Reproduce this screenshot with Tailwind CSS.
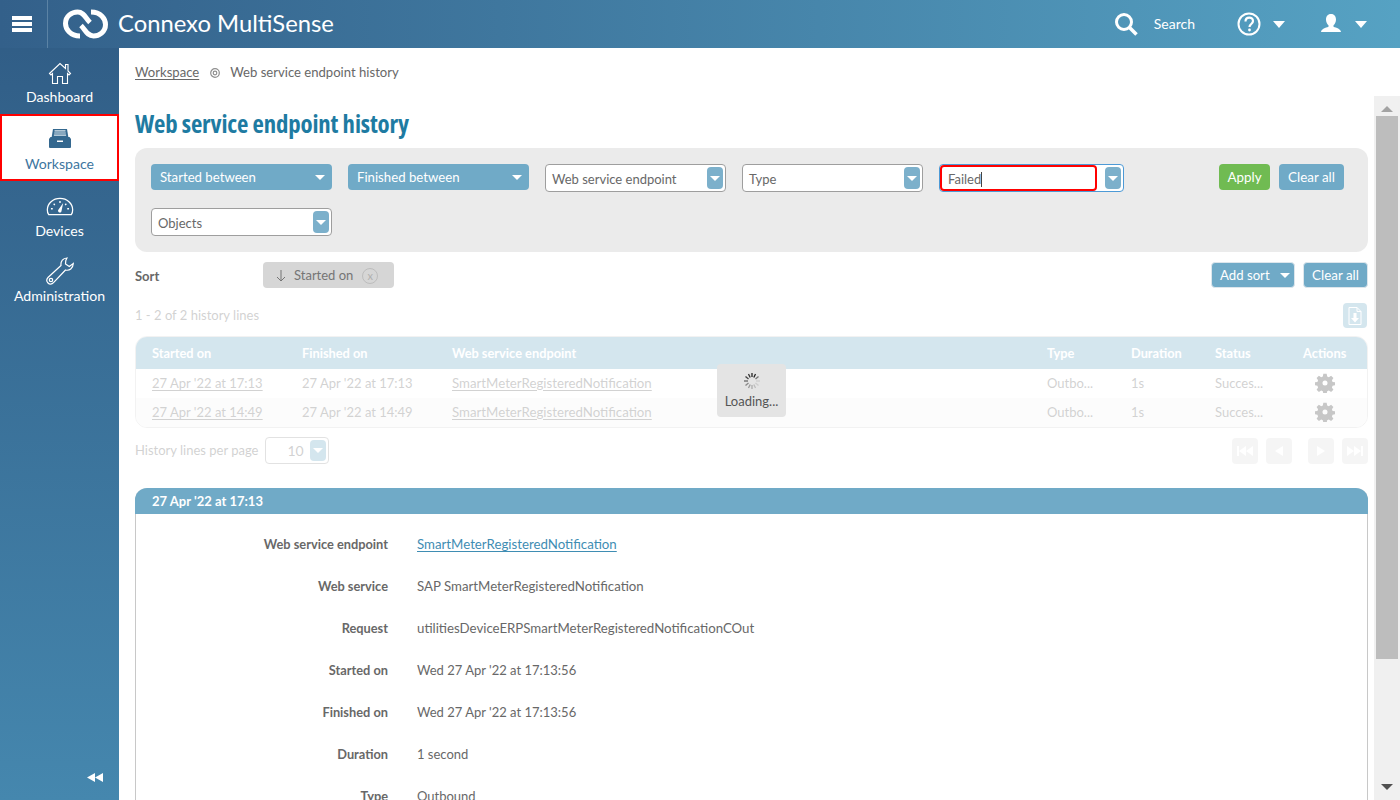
<!DOCTYPE html>
<html lang="en">
<head>
  <meta charset="UTF-8" />
  <title>Web service endpoint history</title>
  <script src="https://cdn.jsdelivr.net/npm/@tailwindcss/browser@4"></script>
</head>
<body class="h-[800px] w-[1400px] overflow-hidden bg-white font-['Lato',sans-serif] text-[13px] text-[#686868]">
  <!-- top bar -->
  <header class="flex h-12 items-center bg-gradient-to-r from-[#33608a] to-[#56a2c3] text-white">
    <div class="flex h-12 w-12 items-center justify-center border-r border-[#5b83a5] pr-[4px]">
      <div class="flex w-5 flex-col gap-[2px]">
        <span class="h-1 bg-white"></span><span class="h-1 bg-white"></span><span class="h-1 bg-white"></span>
      </div>
    </div>
    <svg class="ml-[15px]" width="45" height="30" viewBox="0 0 45 30" fill="none" stroke="white" stroke-width="5">
      <path d="M17 27C7 27 2.500 20 2.500 14.500 2.500 7 9 3 14.500 3 21 3 22.500 9 27 13.500" />
      <path d="M28 3C38 3 42.500 10 42.500 15.500 42.500 23 36 27 30.500 27 24 27 22.500 21 18 16.500" />
    </svg>
    <div class="ml-[10px] text-[23.8px] leading-none">Connexo MultiSense</div>
    <div class="ml-auto flex items-center">
      <svg width="24" height="24" viewBox="0 0 24 24" fill="none" stroke="white">
        <circle cx="10" cy="10" r="7.500" stroke-width="3" />
        <path d="M15.500 15.500 22.500 22.500" stroke-width="3.500" />
      </svg>
      <span class="ml-[16px] pb-[2px] pr-px text-[14px]">Search</span>
      <svg class="ml-[41px]" width="24" height="24" viewBox="0 0 24 24" fill="none" stroke="white">
        <circle cx="12" cy="12" r="10.500" stroke-width="2" />
        <path d="M8.500 9.500c0-5 7.500-5 7.500-.5 0 3-3.500 3-3.500 6" stroke-width="2.200" />
        <circle cx="12.500" cy="18" r="1.400" fill="white" stroke="none" />
      </svg>
      <span class="ml-[12px] h-0 w-0 border-x-[6px] border-t-[7px] border-x-transparent border-t-white"></span>
      <svg class="ml-[35px]" width="22" height="22" viewBox="0 0 22 22" fill="white">
        <path d="M11 1c3.500 0 5 2.700 5 5.500 0 2.300-1 4.500-2.500 5.800v1.500c3 1 7 2 7.500 5.200H1c.5-3.200 4.500-4.200 7.500-5.200v-1.500C7 11 6 8.800 6 6.500 6 3.700 7.500 1 11 1z" />
      </svg>
      <span class="ml-[13px] mr-[33px] h-0 w-0 border-x-[6px] border-t-[7px] border-x-transparent border-t-white"></span>
    </div>
  </header>

  <div class="flex h-[752px]">
    <!-- side menu -->
    <nav class="relative flex w-[119px] shrink-0 flex-col bg-gradient-to-b from-[#315e87] to-[#4587ae] text-[14.100px] text-white">
      <a class="flex h-[66px] flex-col items-center pt-[13px]">
        <svg width="24" height="24" viewBox="0 0 24 24" fill="none" stroke="white" stroke-width="1.100">
          <path d="M1.500 12.500 12 2.500l5.500 5V3.500h2.500v6.500l2.500 2.500-1.500 1.500-1.500-1.500V22.500h-5v-7h-5v7h-5V12.500L3 14z" />
        </svg>
        <span class="mt-[3px] leading-[17px]">Dashboard</span>
      </a>
      <a class="flex h-[67px] flex-col items-center border-2 border-[#ff0000] bg-white pt-[13px] text-[#3d76a0]">
        <svg width="22" height="19" viewBox="0 0 22 19" fill="#34688f">
          <path d="M4 0h14l1.500 9h-17z" />
          <path d="M5.500 1.800h11M5.200 4h11.600M4.900 6.200h12.200" stroke="#dce8f0" stroke-width="1.200" />
          <path d="M1.500 8h19l1.500 2v8a1 1 0 0 1-1 1H1a1 1 0 0 1-1-1v-8z" />
          <path d="M8 11.500h6V13H8z" fill="white" />
        </svg>
        <span class="mt-[7px] leading-[17px]">Workspace</span>
      </a>
      <a class="flex h-[65px] flex-col items-center pt-[16px]">
        <svg width="28" height="19" viewBox="0 0 30 21" fill="none" stroke="white">
          <path d="M2.500 19.500h25c1.500-2 1.500-4 1.500-5.500a14 12.500 0 0 0-28 0c0 1.500 0 3.500 1.500 5.500z" stroke-width="1.400" />
          <path d="M5 13h2M8 7.500l1.300 1.300M15 4.500v2M22 7.500l-1.300 1.300M23 13h2" stroke-width="1.500" />
          <path d="M18.500 6.500 16.800 15a2 2 0 1 1-3.600-1z" fill="white" stroke="none" />
        </svg>
        <span class="mt-[6px] leading-[17px]">Devices</span>
      </a>
      <a class="flex flex-col items-center pt-[11px]">
        <svg width="28" height="28" viewBox="0 0 28 28" fill="none" stroke="white" stroke-width="1.200">
          <path d="M21 1c-4 .3-6.500 3-6 7.500L2 20.500c-1.800 2-1.500 4 0 5.500s3.800 1.500 5.500-.3L19.500 13c4 1 7.500-1.500 7.800-6.500l-4 3-3.800-2.500.3-3.500z" />
          <circle cx="5" cy="23" r="1.700" />
        </svg>
        <span class="mt-[2px] leading-[17px]">Administration</span>
      </a>
      <svg class="absolute bottom-[18px] left-[87px]" width="16" height="9" viewBox="0 0 16 9" fill="white">
        <path d="M8 0v9L0 4.500zM16 0v9L8 4.500z" />
      </svg>
    </nav>

    <main class="min-w-0 flex-1">
      <div class="flex h-12 items-center pl-4 pt-[2px] text-[13.100px]">
        <a class="underline underline-offset-2">Workspace</a>
        <svg class="ml-[11px]" width="10" height="10" viewBox="0 0 10 10" fill="none" stroke="#8f8f8f">
          <circle cx="5" cy="5" r="4.300" stroke-width="1.200" />
          <circle cx="5" cy="5" r="1.800" stroke-width="1.200" />
        </svg>
        <span class="ml-[10px]">Web service endpoint history</span>
      </div>

      <div class="flex h-[704px]">
        <div class="relative w-[1255px] overflow-hidden pl-4 pr-[6px]">
          <h1 class="mt-[13px] h-[27px] font-['Open_Sans',sans-serif] text-[24.800px] font-bold leading-[28px] tracking-[-0.15px] text-[#1e7ba2] font-stretch-condensed">Web service endpoint history</h1>

          <!-- filter panel -->
          <div class="mt-[12px] flex h-[104px] flex-wrap content-start gap-x-4 gap-y-4 rounded-xl bg-[#ebebeb] px-4 pt-4">
            <button class="flex h-[26px] w-[181px] items-center justify-between rounded bg-[#70aac7] pl-[9px] pr-[7px] text-[13.200px] text-white"><span class="pt-[2px]">Started between</span><span class="h-0 w-0 border-x-[5px] border-t-[5px] border-x-transparent border-t-white"></span></button>
            <button class="flex h-[26px] w-[181px] items-center justify-between rounded bg-[#70aac7] pl-[9px] pr-[7px] text-[13.200px] text-white"><span class="pt-[2px]">Finished between</span><span class="h-0 w-0 border-x-[5px] border-t-[5px] border-x-transparent border-t-white"></span></button>
            <div class="flex h-[28px] w-[181px] items-center justify-between rounded border border-[#9e9e9e] bg-white pl-[6px] pr-[2px]"><span class="pt-[4px]">Web service endpoint</span><span class="flex h-[22px] w-4 items-center justify-center rounded-sm bg-[#7cb0cb]"><span class="h-0 w-0 border-x-[5px] border-t-[5px] border-x-transparent border-t-white"></span></span></div>
            <div class="flex h-[28px] w-[181px] items-center justify-between rounded border border-[#9e9e9e] bg-white pl-[6px] pr-[2px]"><span class="pt-[4px]">Type</span><span class="flex h-[22px] w-4 items-center justify-center rounded-sm bg-[#7cb0cb]"><span class="h-0 w-0 border-x-[5px] border-t-[5px] border-x-transparent border-t-white"></span></span></div>
            <div class="flex h-[28px] w-[185px] items-center justify-between rounded border border-[#4d9ad6] bg-white pr-[2px]">
              <span class="flex h-[26px] w-[157px] items-center rounded border-2 border-[#ff0000] pl-[6px] pt-[3px]">Failed<span class="h-[15px] w-px bg-[#444]"></span></span>
              <span class="flex h-[22px] w-4 items-center justify-center rounded-sm bg-[#7cb0cb]"><span class="h-0 w-0 border-x-[5px] border-t-[5px] border-x-transparent border-t-white"></span></span>
            </div>
            <button class="ml-[79px] h-[26px] w-[51px] rounded bg-[#70bb52] pt-[1px] text-[13.400px] text-white">Apply</button>
            <button class="-ml-[7px] h-[26px] w-[65px] rounded bg-[#70aac7] text-[13.400px] text-white">Clear all</button>
            <div class="flex h-[28px] w-[181px] items-center justify-between rounded border border-[#9e9e9e] bg-white pl-[6px] pr-[2px]"><span class="pt-[4px]">Objects</span><span class="flex h-[22px] w-4 items-center justify-center rounded-sm bg-[#7cb0cb]"><span class="h-0 w-0 border-x-[5px] border-t-[5px] border-x-transparent border-t-white"></span></span></div>
          </div>

          <!-- sort bar -->
          <div class="mt-[10px] flex h-[26px] items-center">
            <span class="w-[128px] pt-[3px] font-bold">Sort</span>
            <span class="flex h-[26px] w-[131px] items-center rounded bg-[#d6d6d6] pl-[13px] pt-[1px] text-[#757575]">
              <svg width="10" height="12" viewBox="0 0 10 12" fill="none" stroke="#757575"><path d="M5 0v11M1 7l4 4 4-4" /></svg>
              <span class="ml-[8px]">Started on</span>
              <span class="ml-[9px] flex h-4 w-4 items-center justify-center rounded-full border border-[#bdbdbd] text-[11px] leading-none text-[#b0b0b0]">x</span>
            </span>
            <button class="ml-auto flex h-[26px] w-[84px] items-center justify-between rounded border border-[#dde6ec] bg-[#70aac7] pl-2 pr-[4px] text-[13.200px] text-white"><span class="pt-[2px]">Add sort</span><span class="h-0 w-0 border-x-[5px] border-t-[5px] border-x-transparent border-t-white"></span></button>
            <button class="ml-[8px] h-[26px] w-[65px] rounded border border-[#dde6ec] bg-[#70aac7] text-[13.400px] text-white">Clear all</button>
          </div>

          <!-- history grid, greyed out by the load mask -->
          <div class="relative">
            <div class="flex h-[48px] items-center justify-between pb-[8px] pr-px pt-[15px]">
              <span>1 - 2 of 2 history lines</span>
              <span class="flex h-[25px] w-[24px] items-center justify-center rounded bg-[#70aac7]">
                <svg width="14" height="18" viewBox="0 0 14 18" fill="none" stroke="white">
                  <path d="M1 .5h8l4 4V17.500H1zM9 .5v4h4" />
                  <path d="M5.500 6h3v5h2.500L7 15.500 3 11h2.500z" fill="white" stroke="none" />
                </svg>
              </span>
            </div>
            <div class="overflow-hidden rounded-xl border border-[#d4d4d4]">
              <div class="flex h-[32px] items-center bg-[#70aac7] pl-4 pt-[1px] text-[12.800px] font-bold text-white">
                <span class="w-[150px]">Started on</span><span class="w-[150px]">Finished on</span><span class="w-[595px]">Web service endpoint</span><span class="w-[84px]">Type</span><span class="w-[84px]">Duration</span><span class="w-[88px]">Status</span><span>Actions</span>
              </div>
              <div class="flex h-[29px] items-center bg-white pl-4">
                <a class="w-[150px] underline underline-offset-2">27 Apr '22 at 17:13</a><span class="w-[150px]">27 Apr '22 at 17:13</span><a class="w-[595px] text-[13.250px] underline underline-offset-2">SmartMeterRegisteredNotification</a><span class="w-[84px]">Outbo...</span><span class="w-[84px]">1s</span><span class="w-[100px]">Succes...</span>
                <svg class="mb-[2px]" width="20" height="20" viewBox="0 0 24 24" fill="#444"><path d="M10 1h4l.6 3.200 2 .8L19.300 3.200l2.800 2.800-1.800 2.700.8 2 3.200.6v3.400l-3.200.6-.8 2 1.800 2.700-2.800 2.800-2.700-1.800-2 .8-.6 3.200h-4l-.6-3.200-2-.8-2.700 1.800-2.800-2.800 1.800-2.700-.8-2-3.200-.6v-3.400l3.200-.6.8-2-1.800-2.700 2.800-2.800L7.400 5l2-.8zM12 9a3 3 0 1 0 0 6 3 3 0 0 0 0-6z" fill-rule="evenodd" /></svg>
              </div>
              <div class="flex h-[29px] items-center bg-[#f5f5f5] pl-4">
                <a class="w-[150px] underline underline-offset-2">27 Apr '22 at 14:49</a><span class="w-[150px]">27 Apr '22 at 14:49</span><a class="w-[595px] text-[13.250px] underline underline-offset-2">SmartMeterRegisteredNotification</a><span class="w-[84px]">Outbo...</span><span class="w-[84px]">1s</span><span class="w-[100px]">Succes...</span>
                <svg class="mb-[2px]" width="20" height="20" viewBox="0 0 24 24" fill="#444"><path d="M10 1h4l.6 3.200 2 .8L19.300 3.200l2.800 2.800-1.800 2.700.8 2 3.200.6v3.400l-3.200.6-.8 2 1.800 2.700-2.800 2.800-2.700-1.800-2 .8-.6 3.200h-4l-.6-3.200-2-.8-2.700 1.800-2.800-2.800 1.800-2.700-.8-2-3.200-.6v-3.400l3.200-.6.8-2-1.800-2.700 2.800-2.800L7.400 5l2-.8zM12 9a3 3 0 1 0 0 6 3 3 0 0 0 0-6z" fill-rule="evenodd" /></svg>
              </div>
            </div>
            <div class="mt-[9px] flex h-[27px] items-center">
              <span>History lines per page</span>
              <span class="ml-[6px] flex h-[27px] w-[64px] items-center justify-between rounded border border-[#9e9e9e] pl-[22px] pr-[2px] text-[14px]">10<span class="flex h-[21px] w-4 items-center justify-center rounded-sm bg-[#70aac7]"><span class="h-0 w-0 border-x-[5px] border-t-[5px] border-x-transparent border-t-white"></span></span></span>
              <span class="ml-auto flex gap-[8px]">
                <span class="flex h-[26px] w-[26px] items-center justify-center rounded bg-[#dedede]"><svg width="16" height="10" viewBox="0 0 16 10" fill="white"><path d="M0 0h2v10H0zM9 0v10L2 5zM16 0v10L9 5z" /></svg></span>
                <span class="flex h-[26px] w-[26px] items-center justify-center rounded bg-[#dedede]"><svg width="8" height="10" viewBox="0 0 8 10" fill="white"><path d="M8 0v10L0 5z" /></svg></span>
                <span class="ml-[8px] flex h-[26px] w-[26px] items-center justify-center rounded bg-[#dedede]"><svg width="8" height="10" viewBox="0 0 8 10" fill="white"><path d="M0 0v10l8-5z" /></svg></span>
                <span class="flex h-[26px] w-[26px] items-center justify-center rounded bg-[#dedede]"><svg width="16" height="10" viewBox="0 0 16 10" fill="white"><path d="M0 0v10l7-5zM7 0v10l7-5zM14 0h2v10h-2z" /></svg></span>
              </span>
            </div>
            <!-- load mask -->
            <div class="absolute inset-0 bg-white/70"></div>
            <div class="absolute left-[582px] top-[76px] flex h-[53px] w-[69px] flex-col items-center rounded-sm bg-[#e4e4e4] pt-[8px] text-[#555]">
              <svg width="18" height="18" viewBox="0 0 18 18" fill="none" stroke-width="1.300">
                <path d="M9 1v4" stroke="#222" /><path d="M12.500 2l-1.700 3.500" stroke="#222" /><path d="M5.500 2l1.700 3.500" stroke="#333" /><path d="M2.500 4.500l3 2.500" stroke="#444" /><path d="M1 9h4" stroke="#666" /><path d="M2.500 13.500l3-2.500" stroke="#888" /><path d="M5.500 16l1.700-3.500" stroke="#999" /><path d="M9 17v-4" stroke="#aaa" /><path d="M12.500 16l-1.700-3.500" stroke="#bbb" /><path d="M15.500 13.500l-3-2.500" stroke="#ccc" /><path d="M17 9h-4" stroke="#ccc" /><path d="M15.500 4.500l-3 2.500" stroke="#777" />
              </svg>
              <span class="mt-[2px]">Loading...</span>
            </div>
          </div>

          <!-- preview panel -->
          <section class="mt-[24px] rounded-t-xl border-x border-[#c8c8c8]">
            <div class="-mx-px flex h-[26px] items-center rounded-t-xl bg-[#70aac7] pl-[17px] pt-[2px] font-bold text-white">27 Apr '22 at 17:13</div>
            <dl class="grid grid-cols-[252px_1fr] gap-x-[29px] gap-y-[25px] pt-[22px] leading-[17px]">
              <dt class="text-right text-[12.800px] font-bold">Web service endpoint</dt><dd class="text-[13.250px]"><a class="text-[#3f8db3] underline underline-offset-2">SmartMeterRegisteredNotification</a></dd>
              <dt class="text-right text-[12.800px] font-bold">Web service</dt><dd class="text-[13.250px]">SAP SmartMeterRegisteredNotification</dd>
              <dt class="text-right text-[12.800px] font-bold">Request</dt><dd class="text-[13.250px]">utilitiesDeviceERPSmartMeterRegisteredNotificationCOut</dd>
              <dt class="text-right text-[12.800px] font-bold">Started on</dt><dd>Wed 27 Apr '22 at 17:13:56</dd>
              <dt class="text-right text-[12.800px] font-bold">Finished on</dt><dd>Wed 27 Apr '22 at 17:13:56</dd>
              <dt class="text-right text-[12.800px] font-bold">Duration</dt><dd>1 second</dd>
              <dt class="text-right text-[12.800px] font-bold">Type</dt><dd>Outbound</dd>
            </dl>
          </section>
        </div>

        <!-- scrollbar -->
        <div class="relative ml-auto flex w-[26px] shrink-0 flex-col items-center bg-[#f0f0f0]">
          <span class="mt-[10px] h-0 w-0 border-x-[6px] border-b-[6px] border-x-transparent border-b-[#a3a3a3]"></span>
          <span class="mt-[4px] h-[543px] w-[22px] bg-[#bdbdbd]"></span>
          <span class="mt-auto mb-[10px] h-0 w-0 border-x-[6px] border-t-[6px] border-x-transparent border-t-[#505050]"></span>
        </div>
      </div>
    </main>
  </div>
</body>
</html>
